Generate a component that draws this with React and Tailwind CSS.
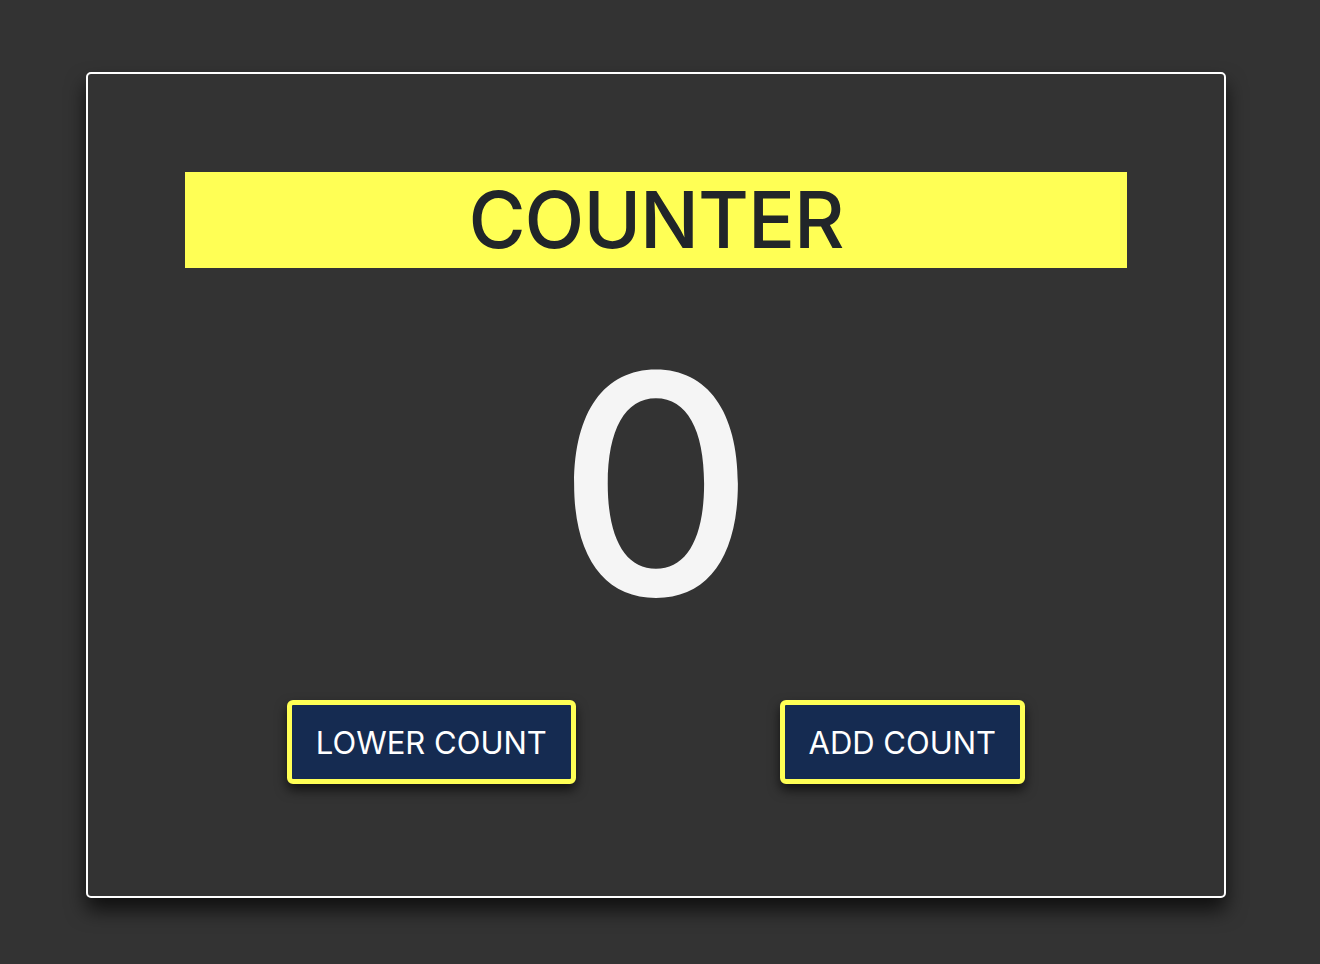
export default function App() {
  return (
    <div className="min-h-[964px] w-full bg-[#333333] pt-[72px] pl-[86px]" style={{ fontFamily: "Inter, 'Noto Sans', sans-serif" }}>
      <div className="w-[1140px] h-[826px] border-2 border-white rounded-[5px] bg-[#333333] shadow-[0_12px_20px_rgba(0,0,0,0.7)] flex flex-col items-center pt-[98px]">
        <div className="w-[942px] h-[96px] bg-[#ffff55] flex items-center justify-center">
          <span className="text-[78px] leading-none font-medium text-[#212529] tracking-[-1px]">COUNTER</span>
        </div>
        <div className="mt-[63px] text-[306px] leading-none font-medium text-[#f5f5f5]">0</div>
        <div className="w-[942px] flex justify-around mt-[63px]">
          <button className="h-[84px] px-[24px] border-[5px] border-[#ffff55] rounded-[6px] bg-[#152b51] text-white text-[31px] leading-none shadow-[0_6px_12px_rgba(0,0,0,0.65)]">LOWER COUNT</button>
          <button className="h-[84px] px-[24px] border-[5px] border-[#ffff55] rounded-[6px] bg-[#152b51] text-white text-[31px] leading-none shadow-[0_6px_12px_rgba(0,0,0,0.65)]">ADD COUNT</button>
        </div>
      </div>
    </div>
  );
}
